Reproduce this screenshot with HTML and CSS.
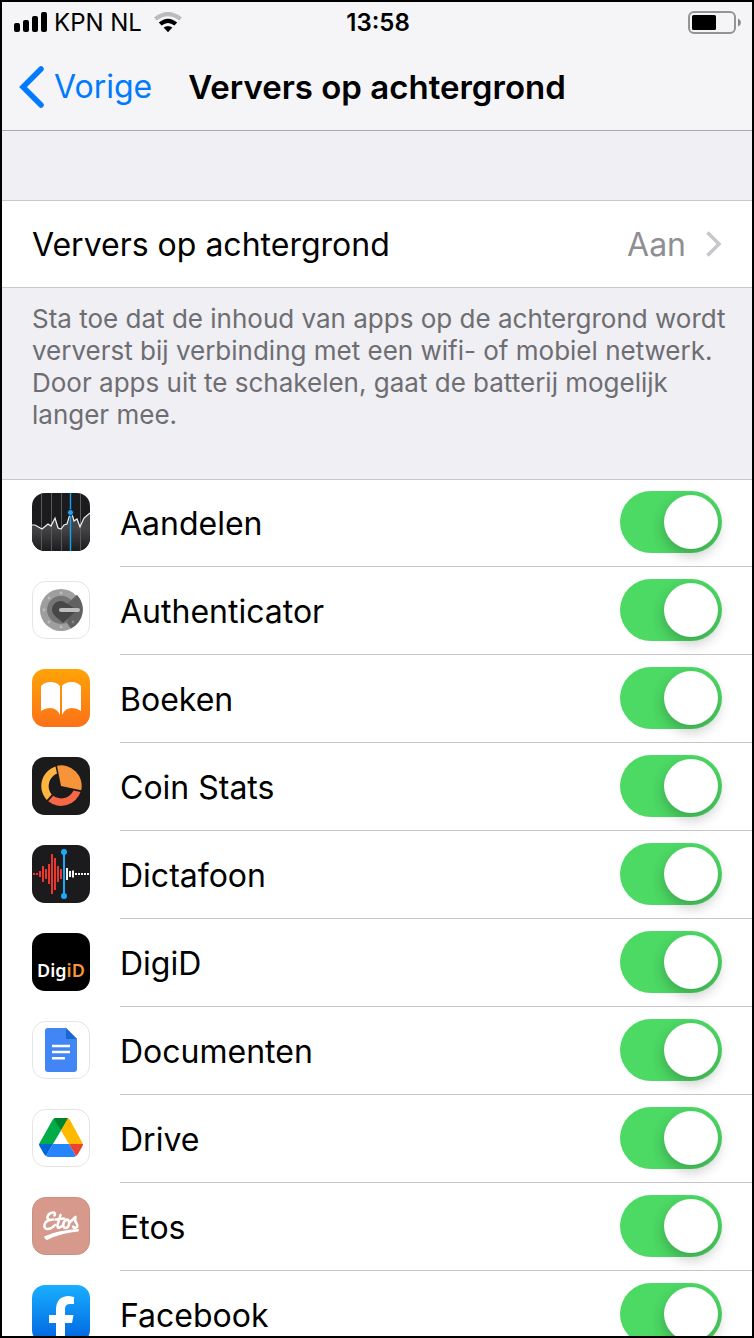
FILE: index.html
```html
<!DOCTYPE html>
<html lang="nl">
<head>
<meta charset="utf-8">
<meta name="viewport" content="width=device-width, initial-scale=1">
<title>Ververs op achtergrond</title>
<link rel="stylesheet" href="styles.css">
</head>
<body>
<div class="screen">
  <header class="top">
    <div class="status">
      <div class="carrier">
        <svg width="34" height="21" viewBox="0 0 34 21" aria-hidden="true"><rect y="11" width="6" height="9" rx="2"/><rect x="9" y="8" width="6" height="12" rx="2"/><rect x="18" y="4" width="6" height="16" rx="2"/><rect x="27" width="6" height="20" rx="2"/></svg>
        <span class="carrier-name">KPN NL</span>
        <svg width="28" height="21" viewBox="0 0 28 21" aria-hidden="true"><path d="M0 5.500Q14-5.500 28 5.500L25.300 8.500Q14 0 2.700 8.500Z" fill="#bbbbbd"/><path d="M4.800 10.500Q14 2.800 23.200 10.500L20.400 13.500Q14 8.500 7.600 13.500Z"/><path d="M9.600 15.500Q14 12.500 18.400 15.500L14 20.200Z"/></svg>
      </div>
      <time class="clock">13:58</time>
      <svg class="battery" width="54" height="23" viewBox="0 0 54 23" aria-hidden="true"><rect x="1" y="1" width="46" height="21" rx="5" fill="none" stroke="#949496" stroke-width="2"/><rect x="4" y="4" width="24" height="15" rx="1.500"/><path d="M50 7.500Q53 9 53 11.500T50 15.500Z" fill="#87878a"/></svg>
    </div>
    <nav class="nav">
      <a class="back" href="#"><svg width="26" height="42" viewBox="0 0 26 42" aria-hidden="true"><path d="M23 3 5 21 23 39" fill="none" stroke="#007aff" stroke-width="5.500" stroke-linecap="round" stroke-linejoin="miter"/></svg><span>Vorige</span></a>
      <h1 class="title">Ververs op achtergrond</h1>
    </nav>
  </header>

  <main>
    <a class="setting" href="#">
      <span class="label">Ververs op achtergrond</span>
      <span class="value">Aan</span>
      <svg width="16" height="26" viewBox="0 0 16 26" aria-hidden="true"><path d="M1.500 1.500 13 13 1.500 24.500" fill="none" stroke="#c7c7cc" stroke-width="3.500"/></svg>
    </a>
    <p class="note">Sta toe dat de inhoud van apps op de achtergrond wordt ververst bij verbinding met een wifi- of mobiel netwerk. Door apps uit te schakelen, gaat de batterij mogelijk langer mee.</p>

    <ul class="apps">
      <li class="app">
        <svg class="icon" viewBox="0 0 58 58" aria-hidden="true"><defs><linearGradient id="st" x2="0" y2="1"><stop offset=".4" stop-color="#454547"/><stop offset="1" stop-color="#1c1c1e"/></linearGradient><clipPath id="tile"><rect width="58" height="58" rx="13"/></clipPath></defs><g clip-path="url(#tile)"><path fill="#1b1b1d" d="M0 0h58v58H0z"/><path fill="url(#st)" d="M0 32 5 33 10 36 16 31 19 33 23 25 27 35 29 36 33 31 36 30 38 21 40 21 42 28 45 26 48 33 52 25 58 20V58H0Z"/><path d="M9.500 0v58M19.500 0v58M29.500 0v58M48.500 0v58" stroke="#59595b"/><path d="M0 32 3 32 10 36 16 31 19 33 23 25 26 35 29 36 32 32 35 31 38 21 40 21 42 28 45 26 48 34 52 25 58 20" fill="none" stroke="#f2f2f2" stroke-width="1.200"/><path d="M38.500 0v58" stroke="#11a5f5" stroke-width="1.400"/><circle cx="38.500" cy="19.500" r="3" fill="#1ba5f8" stroke="#1b1b1d"/></g></svg>
        <div class="body"><label class="label" for="a1">Aandelen</label><input class="switch" type="checkbox" id="a1" checked></div>
      </li>
      <li class="app">
        <svg class="icon" viewBox="0 0 58 58" aria-hidden="true"><rect x=".5" y=".5" width="57" height="57" rx="13" fill="#fff" stroke="#e4e4e4"/><circle cx="29" cy="29" r="21" fill="#9e9e9e"/><path d="M45 14A21 21 0 0 1 39 47.500L29 34Z" fill="#616161"/><path d="M39 19A14 14 0 1 0 36 41L32 29Z" fill="#757575"/><path d="M38 20 45 14A21 21 0 0 1 50 29H29Z" fill="#616161"/><path d="M34 22A8.200 8.200 0 1 0 23 35L31 42 45 29Z" fill="#474747"/><rect x="27" y="27" width="21" height="4" rx="2" fill="#bdbdbd"/><g fill="#bdbdbd"><circle cx="29" cy="12" r="1.400"/><circle cx="17" cy="17" r="1.400"/><circle cx="12" cy="29" r="1.400"/><circle cx="17" cy="41" r="1.400"/><circle cx="29" cy="46" r="1.400"/></g><circle cx="41" cy="41" r="1.400" fill="#858585"/></svg>
        <div class="body"><label class="label" for="a2">Authenticator</label><input class="switch" type="checkbox" id="a2" checked></div>
      </li>
      <li class="app">
        <svg class="icon" viewBox="0 0 58 58" aria-hidden="true"><defs><linearGradient id="bk" x2="0" y2="1"><stop stop-color="#ffa307"/><stop offset="1" stop-color="#fb7118"/></linearGradient></defs><rect width="58" height="58" rx="13" fill="url(#bk)"/><path d="M9 17Q13 13 18 13 25 13 28 17V46Q25 39 18 39 13 39 9 42ZM30 17Q33 13 40 13 45 13 49 17V42Q45 39 40 39 33 39 30 46Z" fill="#fff"/></svg>
        <div class="body"><label class="label" for="a3">Boeken</label><input class="switch" type="checkbox" id="a3" checked></div>
      </li>
      <li class="app">
        <svg class="icon" viewBox="0 0 58 58" aria-hidden="true"><rect width="58" height="58" rx="13" fill="#1b1b1b"/><path d="M23.500 9.500A20.500 20.500 0 0 0 14.800 43L19.700 37.500A13.500 13.500 0 0 1 25 16.500Z" fill="#ffb340"/><path d="M16.200 44.300A20.500 20.500 0 0 0 48.500 35L41.500 33.600A13.500 13.500 0 0 1 21.200 38.700Z" fill="#f76645"/><path d="M25 8.800A20.500 20.500 0 0 1 49.200 33.200L29 29Z" fill="#f7943a"/></svg>
        <div class="body"><label class="label" for="a4">Coin Stats</label><input class="switch" type="checkbox" id="a4" checked></div>
      </li>
      <li class="app">
        <svg class="icon" viewBox="0 0 58 58" aria-hidden="true"><rect width="58" height="58" rx="13" fill="#1b1b1d"/><path d="M2 28v2M5 28v2M8 26v6M11 21v16M14 24v10M17 19v20M20 9v40M23 13v32M26 21v16M29 24v10" stroke="#f5392f" stroke-width="1.900"/><path d="M35 23v12M38 26v6M41 25.500v7M44 28v2M47 28v2M50 28v2M53 28v2M56 28v2" stroke="#fff" stroke-width="1.900"/><path d="M32 7v44" stroke="#1aabf8" stroke-width="2"/><circle cx="32" cy="7" r="3" fill="#1aabf8"/><circle cx="32" cy="51" r="3" fill="#1aabf8"/></svg>
        <div class="body"><label class="label" for="a5">Dictafoon</label><input class="switch" type="checkbox" id="a5" checked></div>
      </li>
      <li class="app">
        <svg class="icon" viewBox="0 0 58 58" aria-hidden="true"><rect width="58" height="58" rx="13"/><text class="digid" x="5" y="44" fill="#fff">Dig<tspan fill="#f59638">iD</tspan></text></svg>
        <div class="body"><label class="label" for="a6">DigiD</label><input class="switch" type="checkbox" id="a6" checked></div>
      </li>
      <li class="app">
        <svg class="icon" viewBox="0 0 58 58" aria-hidden="true"><rect x=".5" y=".5" width="57" height="57" rx="13" fill="#fff" stroke="#e4e4e4"/><path d="M16 7H34L45 18V48Q45 51 42 51H16Q13 51 13 48V10Q13 7 16 7Z" fill="#4285f4"/><path d="M34 7 45 18H34Z" fill="#1967d2"/><path d="M20 25h18M20 31h18M20 37.200h13" stroke="#fff" stroke-width="2.400"/></svg>
        <div class="body"><label class="label" for="a7">Documenten</label><input class="switch" type="checkbox" id="a7" checked></div>
      </li>
      <li class="app">
        <svg class="icon" viewBox="0 0 58 58" aria-hidden="true"><rect x=".5" y=".5" width="57" height="57" rx="13" fill="#fff" stroke="#e4e4e4"/><path d="M7 35 20.500 11Q21.500 9.500 23 9L29 21.500 21 35Z" fill="#00ac47"/><path d="M23 9H35Q36 9 36.500 9.500L29 21.500 22 10Z" fill="#00832d"/><path d="M36 9Q37.500 10 38 11L51 35H37L29 21.500Z" fill="#ffba00"/><path d="M7 35H21L14 47Q12.500 46 12 45L8 38Q7 36.500 7 35Z" fill="#0066da"/><path d="M21 35H37L44 47Q43 48 41 48H17Q15 48 14 47Z" fill="#2684fc"/><path d="M37 35H51Q51 36.500 50 38L46 45Q45 46.500 44 47Z" fill="#ea4335"/></svg>
        <div class="body"><label class="label" for="a8">Drive</label><input class="switch" type="checkbox" id="a8" checked></div>
      </li>
      <li class="app">
        <svg class="icon" viewBox="0 0 58 58" aria-hidden="true"><rect x=".5" y=".5" width="57" height="57" rx="13" fill="#d6998b" stroke="#c98f82"/><g fill="none" stroke="#fff" stroke-width="2.600" stroke-linecap="round" stroke-linejoin="round"><path d="M22.500 18.500Q24 15.500 21 15.500C16 16 13 22 18 23L21 22.500M18 23C12 24 10.500 31 15 32Q19 32.500 23 28"/><path d="M28.500 18 25.500 28Q25 33 30 29M23.500 22.500 32 21.500"/><path d="M35 22.500C30.500 24 30 31 33.500 31 37.500 31 38.500 23.500 35 22.500"/><path d="M38 25 43.500 20C41 26 47 26 45 30Q42.500 32 41 29.500"/></g><path d="M12 39.500Q27 32.500 47 32L46.500 34.500Q30 35.500 15 43Q12.500 42.500 12 39.500Z" fill="#fff"/></svg>
        <div class="body"><label class="label" for="a9">Etos</label><input class="switch" type="checkbox" id="a9" checked></div>
      </li>
      <li class="app">
        <svg class="icon" viewBox="0 0 58 58" aria-hidden="true"><defs><linearGradient id="fb" x2="0" y2="1"><stop stop-color="#19afff"/><stop offset="1" stop-color="#0062e0"/></linearGradient></defs><rect width="58" height="58" rx="13" fill="url(#fb)"/><path d="M24 58V38H17V30H24V25Q24 11 37 11L42 12V19H38Q33 19 33 24V30H41.500L40 38H33V58Z" fill="#fff"/></svg>
        <div class="body"><label class="label" for="a10">Facebook</label><input class="switch" type="checkbox" id="a10" checked></div>
      </li>
    </ul>
  </main>
</div>
</body>
</html>
```

FILE: styles.css
```css
* {
  box-sizing: border-box;
}

body {
  margin: 0;
  font-family: Inter, "Liberation Sans", sans-serif;
  color: #000;
}

.screen {
  height: 100vh;
  overflow: hidden;
  border: 2px solid #000;
  background: #efeff4;
}

svg {
  flex: none;
  display: block;
}

.top {
  background: #f5f5f8;
  border-bottom: 1px solid #a9a9ad;
}

.status {
  display: grid;
  grid-template-columns: 1fr auto 1fr;
  align-items: center;
  height: 41px;
  padding: 0 10px 0 12px;
}

.carrier {
  display: flex;
  align-items: center;
  gap: 6px;
}

.carrier-name {
  font-size: 24px;
  margin-right: 6px;
}

.clock {
  font-size: 24px;
  font-weight: 600;
}

.battery {
  justify-self: end;
}

.nav {
  display: grid;
  grid-template-columns: 1fr auto 1fr;
  align-items: center;
  height: 87px;
  padding: 0 16px;
}

.back {
  display: flex;
  align-items: center;
  gap: 10px;
  color: #007aff;
  font-size: 32px;
  text-decoration: none;
}

.title {
  margin: 0;
  font-size: 33px;
  font-weight: 600;
  white-space: nowrap;
}

.setting {
  display: flex;
  align-items: center;
  height: 88px;
  margin-top: 69px;
  padding: 0 30px;
  border: solid #c8c7cc;
  border-width: 1px 0;
  background: #fff;
  color: inherit;
  text-decoration: none;
}

.label {
  flex: 1;
  font-size: 32px;
}

.value {
  margin-right: 20px;
  font-size: 32px;
  color: #8e8e93;
}

.note {
  margin: 0;
  padding: 15px 24px 48px 30px;
  font-size: 26px;
  line-height: 32px;
  color: #6d6d72;
}

.apps {
  margin: 0;
  padding: 0;
  list-style: none;
  background: #fff;
  box-shadow: inset 0 1px #c8c7cc;
}

.app {
  display: flex;
  gap: 30px;
  height: 88px;
  padding-left: 30px;
}

.icon {
  width: 58px;
  height: 58px;
  margin-top: 14px;
}

.body {
  flex: 1;
  display: flex;
  align-items: center;
  padding: 0 30px 1px 0;
  border-bottom: 1px solid #c8c7cc;
}

.body .label {
  padding-top: 2px;
}

.digid {
  font: 600 18px "Noto Sans", sans-serif;
}

.switch {
  appearance: none;
  flex: none;
  width: 102px;
  height: 62px;
  margin: 0;
  padding: 4px;
  border-radius: 31px;
  background: #e5e5ea;
}

.switch::before {
  content: "";
  display: block;
  width: 54px;
  height: 54px;
  border-radius: 50%;
  background: #fff;
  box-shadow: 0 6px 14px rgba(0, 0, 0, 0.24);
}

.switch:checked {
  background: #4cd964;
}

.switch:checked::before {
  margin-left: auto;
}
```
